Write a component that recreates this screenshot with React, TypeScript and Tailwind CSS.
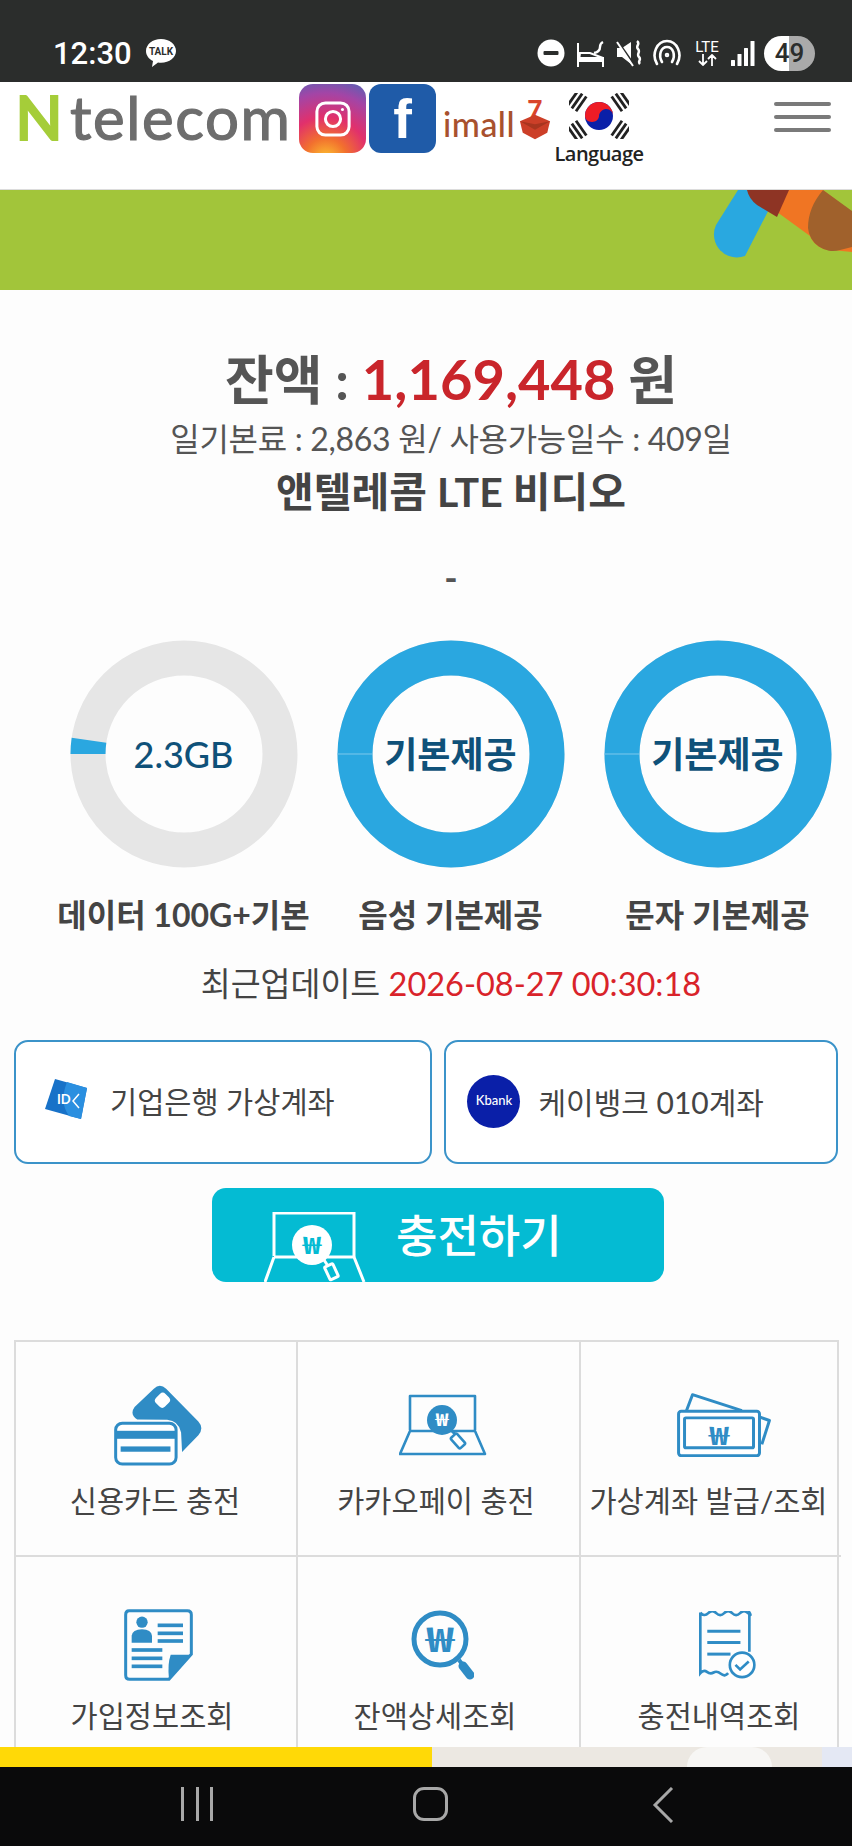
import React from "react";

const B = "#2f8cc5";

function Won({ x, y, size, fill, sx = 1.3 }: { x: number; y: number; size: number; fill: string; sx?: number }) {
  return (
    <g transform={`translate(${x} ${y}) scale(${sx} 1)`}>
      <text x="0" y="0" fontSize={size} fontWeight={700} fill={fill} stroke="none" textAnchor="middle" dominantBaseline="central" fontFamily="'Noto Sans CJK KR', sans-serif">
        ₩
      </text>
    </g>
  );
}

function StatusIcons() {
  return (
    <div className="flex items-center">
      <svg width="28" height="28" viewBox="0 0 28 28" className="mr-[11px]">
        <circle cx="14" cy="14" r="13.5" fill="#fff" />
        <rect x="6.5" y="12" width="15" height="4" rx="1" fill="#2b2d2c" />
      </svg>
      <svg width="28" height="28" viewBox="0 0 28 28" className="mr-[12px]" fill="none" stroke="#fff" strokeWidth="2">
        <path d="M2 4v24M27 28v-9H2M4 14h10l13 5v3H3z" />
        <path d="M18 14c5-1 6-3 6-6 0-2 1-4 3-5" strokeWidth="2.4" />
        <path d="M3 19h23v3H3z" fill="#fff" />
      </svg>
      <svg width="26" height="28" viewBox="0 0 26 28" className="mr-[10px]" fill="#fff">
        <path d="M1 9h5l9-6v22l-9-7H1z" />
        <path d="M1 1l18 26" stroke="#2b2d2c" strokeWidth="2" />
        <path d="M1 3l16 24" stroke="#fff" strokeWidth="2" />
        <path d="M21 2c4 3-2 5 1 8s-2 5 1 8-2 4 1 7" fill="none" stroke="#fff" strokeWidth="2.5" />
      </svg>
      <svg width="30" height="28" viewBox="0 0 30 28" className="mr-[11px]" fill="none" stroke="#fff" strokeWidth="2.6" strokeLinecap="round">
        <path d="M5 25C-1 15 5 2 15 2s16 13 10 23" />
        <path d="M10 23C6 16 9 8 15 8s9 8 5 15" />
        <circle cx="15" cy="16" r="1" />
      </svg>
      <div className="mr-[10px] flex w-[28px] flex-col items-center text-white">
        <span className="font-['Roboto',sans-serif] text-[15px] leading-[14px]">LTE</span>
        <svg width="20" height="12" viewBox="0 0 20 12" fill="none" stroke="#fff" strokeWidth="1.8">
          <path d="M6 0v10M2 7l4 4 4-4M15 12V2M11 5l4-4 4 4" />
        </svg>
      </div>
      <svg width="24" height="26" viewBox="0 0 24 26" className="mr-[9px]" fill="#fff">
        <rect x="0" y="20" width="4" height="6" rx="0.5" />
        <rect x="6.5" y="14" width="4" height="12" rx="0.5" />
        <rect x="13" y="8" width="4" height="18" rx="0.5" />
        <rect x="19.500" y="1" width="4" height="25" rx="0.5" />
      </svg>
      <div className="flex h-[35px] w-[51px] items-center justify-center rounded-full bg-[linear-gradient(90deg,#fff_0%,#fff_50%,#aaa_50%,#aaa_100%)] font-['Roboto',sans-serif] text-[26px] font-medium text-[#2b2d2c]">
        49
      </div>
    </div>
  );
}

function Flag() {
  const tri = (x: number, y: number, a: number) => (
    <g transform={`translate(${x} ${y}) rotate(${a})`} fill="#222">
      <rect x="-9" y="-6.5" width="18" height="2.8" />
      <rect x="-9" y="-1.4" width="18" height="2.8" />
      <rect x="-9" y="3.7" width="18" height="2.8" />
    </g>
  );
  return (
    <svg width="60" height="46" viewBox="0 0 60 46">
      {tri(8, 8, -55)}
      {tri(52, 8, 55)}
      {tri(8, 38, 55)}
      {tri(52, 38, -55)}
      <circle cx="30" cy="23" r="14" fill="#0a1fa8" />
      <path d="M16 23a14 14 0 0 1 28 0c0-4-3-7-7-7s-7 4-7 7-3 6-7 6-7-3-7-6z" fill="#ee1c25" />
    </svg>
  );
}

function Header() {
  return (
    <header className="flex h-[108px] shrink-0 items-start border-b border-[#dcdcdc] bg-white">
      <div className="ml-[15px] mt-[1px] flex h-[68px] w-[275px] items-center">
        <span className="font-['Lato',sans-serif] text-[62px] font-black leading-none text-[#a5cd39]">N</span>
        <span className="ml-[7px] font-['Lato',sans-serif] text-[60px] font-normal leading-none tracking-[1.6px] text-[#6d6d6d] [-webkit-text-stroke:1.2px_#6d6d6d]">telecom</span>
      </div>
      <div className="ml-[9px] mt-[2px] flex h-[69px] w-[67px] items-center justify-center rounded-[14px] bg-[radial-gradient(circle_at_40%_110%,#fdc830_0%,#f2702e_25%,#e1306c_50%,#a345a6_78%,#5463b5_100%)]">
        <svg width="36" height="38" viewBox="0 0 38 38" fill="none" stroke="#fff" strokeWidth="3.2">
          <rect x="2" y="2" width="34" height="34" rx="9" />
          <circle cx="19" cy="19" r="8" />
          <circle cx="29" cy="9" r="1.6" fill="#fff" stroke="none" />
        </svg>
      </div>
      <div className="ml-[3px] mt-[2px] flex h-[69px] w-[67px] items-center justify-center rounded-[12px] bg-[#1f5ba8] font-['Liberation_Sans',sans-serif] text-[56px] font-bold leading-none text-white">
        f
      </div>
      <div className="ml-[7px] mt-[14px] flex w-[113px] items-center">
        <span className="mt-[10px] font-['Lato',sans-serif] text-[34px] font-medium leading-none tracking-[0.5px] text-[#a8512e]">imall</span>
        <div className="relative ml-[4px] mt-[3px] h-[42px] w-[32px]">
          <span className="absolute left-[8px] -top-[3px] font-['Lato',sans-serif] text-[26px] font-black leading-[26px] text-[#d9452b]">7</span>
          <svg width="32" height="28" viewBox="0 0 34 28" className="absolute bottom-0 left-0">
            <path d="M1 8l16-7 16 7-3 12-13 7-13-7z" fill="#cc3f28" />
            <path d="M1 8l16 3 16-3-16 9z" fill="#a8351f" />
          </svg>
        </div>
      </div>
      <div className="-ml-[3px] mt-[11px] flex w-[92px] flex-col items-center">
        <Flag />
        <span className="mt-[2px] font-['Open_Sans',sans-serif] text-[20px] font-semibold leading-[26px] tracking-[-0.5px] text-[#222]">Language</span>
      </div>
      <div className="ml-[129px] mt-[20px] flex w-[57px] flex-col gap-[9px]">
        <div className="h-[4px] rounded-full bg-[#7a7a7a]" />
        <div className="h-[4px] rounded-full bg-[#7a7a7a]" />
        <div className="h-[4px] rounded-full bg-[#7a7a7a]" />
      </div>
    </header>
  );
}

function Banner() {
  return (
    <div className="relative h-[100px] shrink-0 overflow-hidden bg-[#a2c53a]">
      <svg width="852" height="100" viewBox="0 0 852 100" className="absolute left-0 top-0">
        <path d="M738 0h41l-34 66a23 23 0 0 1-29-31z" fill="#29a8e0" />
        <path d="M747 0h76l29 22v40l-20 -2a23 23 0 0 1-22-14z" fill="#f07523" />
        <path d="M747 0h42l-12 27-20-12q-8-6-10-15z" fill="#8e3424" />
        <path d="M823 0l29 21v36l-12 3a25 25 0 0 1-32-22c0-14 5-26 15-38z" fill="#a0612c" />
      </svg>
    </div>
  );
}

function Donut({ value, text, label, thin }: { value: number; text: string; label: string; thin?: boolean }) {
  const r = 96;
  const c = 2 * Math.PI * r;
  return (
    <div className="flex w-[267px] flex-col items-center">
      <div className="relative h-[230px] w-[230px]">
        <svg width="230" height="230" viewBox="0 0 230 230">
          <circle cx="115" cy="115" r={r} fill="none" stroke="#e6e6e6" strokeWidth="35" />
          <circle
            cx="115"
            cy="115"
            r={r}
            fill="none"
            stroke="#2aa7e0"
            strokeWidth="35"
            strokeDasharray={`${c * value} ${c}`}
            transform="rotate(180 115 115)"
          />
          {value === 1 && <line x1="1" y1="115" x2="36" y2="115" stroke="#7cc8ec" strokeWidth="1" />}
        </svg>
        <div className={`absolute inset-0 flex items-center justify-center leading-none text-[#0f5179] ${thin ? "text-[36px] font-medium" : "text-[36px] font-bold"}`}>
          {text}
        </div>
      </div>
      <div className="mt-[26px] h-[40px] whitespace-nowrap text-[32px] font-bold leading-[40px] text-[#444]">{label}</div>
    </div>
  );
}

function CardIcon() {
  return (
    <svg width="88" height="82" viewBox="340 190 265 245">
      <path d="M402 258L460 203Q478 186 497 203L594 302Q612 322 594 343L545 394L542 335Q535 300 500 297L410 296Q386 280 402 258z" fill={B} />
      <rect x="467" y="218" width="38" height="40" rx="12" transform="rotate(45 486 238)" fill="#fff" />
      <rect x="345" y="307" width="182" height="123" rx="20" fill="#fff" stroke={B} strokeWidth="9" />
      <rect x="345" y="330" width="182" height="24" fill={B} />
      <rect x="360" y="377" width="150" height="16" fill={B} />
    </svg>
  );
}

function LaptopIcon() {
  return (
    <svg width="88" height="62" viewBox="0 0 88 62" fill="none" stroke={B} strokeWidth="2.6" strokeLinejoin="round">
      <path d="M11 36V2h65v34" />
      <path d="M11 37L1 60h85L76 37z" />
      <circle cx="43" cy="26" r="15" fill={B} stroke="none" />
      <Won x={43} y={25} size={17} fill="#fff" />
      <path d="M53 37l3 3" strokeWidth="3" />
      <rect x="55" y="40" width="8" height="14" rx="1.5" transform="rotate(-42 59 47)" fill="#fff" />
    </svg>
  );
}

function MoneyIcon() {
  return (
    <svg width="94" height="64" viewBox="750 215 282 193" fill="none" stroke={B} strokeWidth="9" strokeLinejoin="round">
      <path d="M778 268L796 220L945 268" />
      <path d="M1000 288L1028 298L1005 370" />
      <rect x="754" y="270" width="244" height="134" rx="8" fill="#fff" />
      <rect x="772" y="290" width="208" height="90" rx="4" />
      <Won x={876} y={338} size={76} fill={B} sx={1.35} />
    </svg>
  );
}

function DocIcon() {
  return (
    <svg width="69" height="72" viewBox="365 865 207 215">
      <path d="M380 870H555Q567 870 567 882V1000L500 1075H382Q370 1075 370 1063V882Q370 870 380 870z" fill="none" stroke={B} strokeWidth="9" />
      <circle cx="419" cy="904" r="17" fill={B} />
      <path d="M388 966V945Q390 925 419 925Q447 925 449 945V966z" fill={B} />
      <rect x="466" y="908" width="76" height="11" fill={B} />
      <rect x="466" y="932" width="76" height="11" fill={B} />
      <rect x="466" y="955" width="76" height="11" fill={B} />
      <rect x="388" y="982" width="92" height="11" fill={B} />
      <rect x="388" y="1007" width="92" height="11" fill={B} />
      <rect x="388" y="1031" width="92" height="11" fill={B} />
      <path d="M505 1002H566L500 1075Q495 1030 505 1002z" fill={B} />
    </svg>
  );
}

function SearchIcon() {
  return (
    <svg width="63" height="71" viewBox="0 0 63 71" fill="none" stroke={B}>
      <circle cx="29" cy="29" r="26" strokeWidth="5" />
      <Won x={29} y={27} size={34} fill={B} sx={1.4} />
      <path d="M48 50l3 4" strokeWidth="4" />
      <path d="M52 56l7 9" strokeWidth="9" strokeLinecap="round" />
    </svg>
  );
}

function ReceiptIcon() {
  return (
    <svg width="57" height="68" viewBox="815 878 172 204" fill="none" stroke={B} strokeWidth="8">
      <path d="M819 882q12 14 24 2t24 0 24 0 24 0 24 0 24 0 4-2V1000M819 882V1065q10-12 20-4t20 2 22 4 22-2" />
      <rect x="840" y="934" width="100" height="9" fill={B} stroke="none" />
      <rect x="840" y="968" width="100" height="9" fill={B} stroke="none" />
      <rect x="840" y="1003" width="70" height="9" fill={B} stroke="none" />
      <circle cx="945" cy="1040" r="37" fill="#fff" strokeWidth="8" />
      <path d="M925 1040l14 14 26-24" strokeWidth="8" />
    </svg>
  );
}

function Cell({ children, label, shift, textShift, row2, noRight }: { children: React.ReactNode; label: string; shift: string; textShift: string; row2?: boolean; noRight?: boolean }) {
  return (
    <div className={`flex h-[215px] flex-col items-center border-[#dcdcdc] ${noRight ? "" : "border-r-2"} ${row2 ? "pt-[52px]" : "border-b-2 pt-[42px]"}`}>
      <div className={`flex items-center justify-center ${row2 ? "h-[72px]" : "h-[82px]"} ${shift}`}>{children}</div>
      <div className={`mt-[15px] whitespace-nowrap text-[29.5px] leading-[40px] text-[#444] ${textShift}`}>{label}</div>
    </div>
  );
}

export default function App() {
  return (
    <div className="flex h-[1846px] w-[852px] flex-col overflow-hidden bg-[#fdfdfd] font-['Lato','Noto_Sans_CJK_KR',sans-serif]">
      <div className="flex h-[82px] shrink-0 items-center justify-between bg-[#2b2d2c] pl-[53px] pr-[37px] pt-[24px]">
        <div className="flex items-center">
          <span className="font-['Roboto',sans-serif] text-[31px] font-medium leading-none text-white">12:30</span>
          <svg width="32" height="30" viewBox="0 0 32 30" className="ml-[13px]">
            <path d="M16 1C7.5 1 1 6.5 1 13c0 4.5 3 8 7 10l-1 6 6-4.5c1 .2 2 .3 3 .3 8.500 0 15-5.300 15-11.800S24.500 1 16 1z" fill="#fff" />
            <text x="16" y="17" textAnchor="middle" fontSize="10" fontWeight="700" fill="#2b2d2c" fontFamily="Roboto, sans-serif">TALK</text>
          </svg>
        </div>
        <StatusIcons />
      </div>
      <Header />
      <Banner />
      <main className="min-h-0 flex-1 overflow-hidden">
        <div className="mt-[59px] h-[60px] whitespace-nowrap pl-[50px] text-center text-[53px] font-bold leading-[60px] text-[#555]">
          잔액 : <span className="text-[56px] text-[#c9252b]">1,169,448</span> 원
        </div>
        <div className="mt-[10px] h-[40px] pl-[50px] text-center text-[32px] leading-[40px] tracking-[-0.3px] text-[#555]">일기본료 : 2,863 원/ 사용가능일수 : 409일</div>
        <div className="mt-[9px] h-[48px] pl-[50px] text-center text-[41px] font-bold leading-[48px] text-[#444]">앤텔레콤 LTE 비디오</div>
        <div className="mt-[41px] h-[40px] pl-[50px] text-center text-[36px] font-bold leading-[40px] text-[#555]">-</div>
        <div className="mt-[42px] flex pl-[50px]">
          <Donut value={0.023} text="2.3GB" label="데이터 100G+기본" thin />
          <Donut value={1} text="기본제공" label="음성 기본제공" />
          <Donut value={1} text="기본제공" label="문자 기본제공" />
        </div>
        <div className="mt-[29px] h-[40px] pl-[50px] text-center text-[32.500px] leading-[40px] text-[#444]">
          최근업데이트 <span className="text-[#d9232a]">2026-08-27 00:30:18</span>
        </div>
        <div className="mt-[36px] flex gap-[12px] px-[14px]">
          <div className="flex h-[124px] w-[419px] items-center rounded-[14px] border-2 border-[#3b93c9] bg-white pl-[27px]">
            <svg width="45" height="42" viewBox="0 0 45 42" className="-mt-[6px]">
              <path d="M12 1l32 9-6 31-36-10z" fill="#1872c8" />
              <path d="M24 4q-8 20 2 34l12 3 6-31z" fill="#2a8fe0" />
              <text x="14" y="26" fontSize="13" fontWeight="700" fill="#fff" fontFamily="Lato, sans-serif">ID</text>
              <path d="M36 16l-6 7 6 7" fill="none" stroke="#fff" strokeWidth="1.5" />
            </svg>
            <span className="ml-[22px] text-[29.5px] leading-none text-[#444]">기업은행 가상계좌</span>
          </div>
          <div className="flex h-[124px] w-[394px] items-center rounded-[14px] border-2 border-[#3b93c9] bg-white pl-[21px]">
            <div className="-mt-[2px] flex h-[53px] w-[53px] items-center justify-center rounded-full bg-[#0a1fa8] font-['Lato',sans-serif] text-[13px] font-medium text-white">Kbank</div>
            <span className="ml-[18px] text-[30px] leading-none text-[#444]">케이뱅크 010계좌</span>
          </div>
        </div>
        <div className="ml-[212px] mt-[24px] flex h-[94px] w-[452px] overflow-hidden rounded-[14px] bg-[#04bbd3]">
          <svg width="102" height="70" viewBox="0 0 102 70" className="ml-[52px] mt-[24px] shrink-0" fill="none" stroke="#fff" strokeWidth="3">
            <path d="M10 44V1h80v44" />
            <path d="M10 45L1 70M90 45l10 25M10 45h28M62 45h28" />
            <circle cx="48" cy="33" r="20" fill="#fff" stroke="none" />
            <Won x={48} y={32} size={24} fill="#04bbd3" />
            <path d="M60 48l4 6" />
            <rect x="63" y="53" width="9" height="14" rx="1" transform="rotate(-25 67 60)" fill="#04bbd3" />
          </svg>
          <span className="ml-[30px] mt-[18px] text-[45px] font-medium leading-[60px] text-white">충전하기</span>
        </div>
        <div className="ml-[14px] mt-[58px] grid w-[825px] grid-cols-[282px_283px_260px] border-l-2 border-r-2 border-t-2 border-[#dcdcdc]">
          <Cell label="신용카드 충전" shift="ml-[4px]" textShift="mr-[2px]"><CardIcon /></Cell>
          <Cell label="카카오페이 충전" shift="ml-[8px]" textShift="mr-[5px]"><LaptopIcon /></Cell>
          <Cell label="가상계좌 발급/조회" shift="ml-[26px]" textShift="mr-[5px]" noRight><MoneyIcon /></Cell>
          <Cell label="가입정보조회" shift="ml-[4px]" textShift="mr-[8px]" row2><DocIcon /></Cell>
          <Cell label="잔액상세조회" shift="ml-[7px]" textShift="mr-[7px]" row2><SearchIcon /></Cell>
          <Cell label="충전내역조회" shift="ml-[32px]" textShift="ml-[16px]" row2 noRight><ReceiptIcon /></Cell>
        </div>
      </main>
      <div className="flex h-[20px] shrink-0">
        <div className="w-[432px] bg-[#ffd907]" />
        <div className="relative flex-1 overflow-hidden bg-[#ece8e2]">
          <div className="absolute left-[255px] top-0 h-[40px] w-[85px] rounded-full bg-[#f7f6f4]" />
          <div className="absolute right-0 top-0 h-[20px] w-[30px] bg-[#e4e8f4]" />
        </div>
      </div>
      <nav className="flex h-[79px] shrink-0 items-start bg-[#0a0a0b] pl-[181px] pt-[20px]">
        <div className="flex h-[34px] w-[32px] justify-between">
          <div className="h-full w-[3px] bg-[#a8a8a8]" />
          <div className="h-full w-[3px] bg-[#a8a8a8]" />
          <div className="h-full w-[3px] bg-[#a8a8a8]" />
        </div>
        <div className="ml-[200px] h-[34px] w-[35px] rounded-[11px] border-[3px] border-[#a8a8a8]" />
        <svg width="22" height="36" viewBox="0 0 22 36" className="ml-[204px]" fill="none" stroke="#a8a8a8" strokeWidth="3">
          <path d="M20 1L3 18l17 17" />
        </svg>
      </nav>
    </div>
  );
}
